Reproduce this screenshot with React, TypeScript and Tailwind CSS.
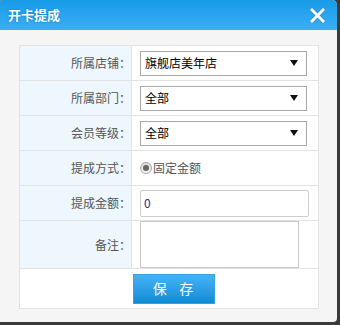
import React from "react";

const font = { fontFamily: '"Noto Sans CJK SC", "Noto Sans", sans-serif' };

function Select({ value }: { value: string }) {
  return (
    <div className="h-[25px] w-[167px] border border-[#a9a9a9] bg-white flex items-center justify-between pl-[4px] pr-[8px]">
      <span className="text-[12px] leading-none text-black">{value}</span>
      <svg width="8" height="6" viewBox="0 0 8 6">
        <path d="M0 0 H8 L4 6 Z" fill="#111" />
      </svg>
    </div>
  );
}

function Row({ label, h, children }: { label: string; h: string; children: React.ReactNode }) {
  return (
    <div className={`flex border-b border-[#e3e3e3] ${h}`}>
      <div className="w-[112px] shrink-0 bg-[#eef7fe] border-r border-[#e3e3e3] flex items-center justify-end text-[12px] text-[#555]">
        {label}
      </div>
      <div className="flex-1 flex items-center pl-[8px]">{children}</div>
    </div>
  );
}

export default function App() {
  return (
    <div className="w-[340px] h-[325px] bg-[#3a3a3a]" style={font}>
      <div className="w-[337px] h-[322px] bg-[#f5f5f5] rounded-tr-[5px] rounded-br-[4px] rounded-tl-[2px] overflow-hidden flex flex-col">
        <div className="h-[30px] bg-gradient-to-b from-[#169be6] to-[#38aef8] flex items-center justify-between pl-[8px] pr-[12px]">
          <span className="text-white font-bold text-[13px] [text-shadow:0_0_2px_#0a6fb0]">开卡提成</span>
          <svg width="15" height="15" viewBox="0 0 15 15">
            <path d="M2 2 L13 13 M13 2 L2 13" stroke="#1c78c0" strokeWidth="4.5" strokeLinecap="round" opacity="0.5" />
            <path d="M2 2 L13 13 M13 2 L2 13" stroke="#fff" strokeWidth="3" strokeLinecap="square" />
          </svg>
        </div>
        <div className="pt-[15px] pl-[19px]">
          <div className="w-[300px] border-l border-r border-t border-[#e3e3e3] bg-white">
            <Row label="所属店铺：" h="h-[35px]">
              <Select value="旗舰店美年店" />
            </Row>
            <Row label="所属部门：" h="h-[35px]">
              <Select value="全部" />
            </Row>
            <Row label="会员等级：" h="h-[35px]">
              <Select value="全部" />
            </Row>
            <Row label="提成方式：" h="h-[35px]">
              <div className="flex items-center gap-[1px] text-[12px] text-[#555]">
                <span className="w-[12px] h-[12px] rounded-full border border-[#aaa] bg-gradient-to-b from-[#d8d8d8] to-[#f6f6f6] flex items-center justify-center">
                  <span className="w-[6px] h-[6px] rounded-full bg-[#666]" />
                </span>
                <span>固定金额</span>
              </div>
            </Row>
            <Row label="提成金额：" h="h-[35px]">
              <div className="h-[27px] w-[169px] border border-[#ccc] rounded-[2px] bg-white flex items-center pl-[3px] text-[12px] text-[#2b2b8a]">
                0
              </div>
            </Row>
            <Row label="备注：" h="h-[48px]">
              <div className="h-[47px] w-[159px] border border-[#c8c8c8] bg-white" />
            </Row>
            <div className="h-[40px] border-b border-[#e3e3e3] flex items-center pl-[113px]">
              <button className="w-[82px] h-[30px] bg-gradient-to-b from-[#45b2f6] to-[#0a8cd6] border border-[#3a9ee0] text-white text-[14px] tracking-[2px]">
                保&nbsp;&nbsp;存
              </button>
            </div>
          </div>
        </div>
      </div>
    </div>
  );
}
